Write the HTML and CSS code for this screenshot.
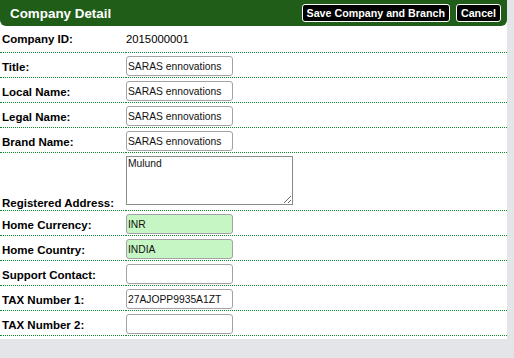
FILE: index.html
```html
<!DOCTYPE html>
<html lang="en">
<head>
    <meta charset="UTF-8">
    <meta name="viewport" content="width=device-width, initial-scale=1.0">
    <title>Company Detail</title>
    <link rel="stylesheet" href="styles.css">
</head>
<body>

<div class="panel">
    <div class="panel-header">
        <h1>Company Detail</h1>
        <div class="actions">
            <button class="action-button">Save Company and Branch</button>
            <button class="action-button">Cancel</button>
        </div>
    </div>

    <table class="detail-table">
        <tr class="plain-row">
            <td class="label">Company ID:</td>
            <td class="value">2015000001</td>
        </tr>
        <tr>
            <td class="label">Title:</td>
            <td class="field"><input type="text" value="SARAS ennovations"></td>
        </tr>
        <tr>
            <td class="label">Local Name:</td>
            <td class="field"><input type="text" value="SARAS ennovations"></td>
        </tr>
        <tr>
            <td class="label">Legal Name:</td>
            <td class="field"><input type="text" value="SARAS ennovations"></td>
        </tr>
        <tr>
            <td class="label">Brand Name:</td>
            <td class="field"><input type="text" value="SARAS ennovations"></td>
        </tr>
        <tr class="address-row">
            <td class="label">Registered Address:</td>
            <td class="field"><textarea>Mulund</textarea></td>
        </tr>
        <tr>
            <td class="label">Home Currency:</td>
            <td class="field"><input type="text" class="locked" value="INR"></td>
        </tr>
        <tr>
            <td class="label">Home Country:</td>
            <td class="field"><input type="text" class="locked" value="INDIA"></td>
        </tr>
        <tr>
            <td class="label">Support Contact:</td>
            <td class="field"><input type="text" value=""></td>
        </tr>
        <tr>
            <td class="label">TAX Number 1:</td>
            <td class="field"><input type="text" value="27AJOPP9935A1ZT"></td>
        </tr>
        <tr>
            <td class="label">TAX Number 2:</td>
            <td class="field"><input type="text" value=""></td>
        </tr>
    </table>
</div>

</body>
</html>
```

FILE: styles.css
```css
body {
    margin: 0;
    padding: 0;
    background-color: #e4e5e9;
    font-family: "Liberation Sans", Arial, sans-serif;
    color: #000;
}
.panel {
    width: 507px;
    background: white;
    padding-bottom: 3px;
}
.panel-header {
    height: 26px;
    background-color: #1f5d18;
    border-radius: 0 0 6px 6px;
    display: flex;
    align-items: center;
    justify-content: space-between;
    padding: 0 6px 0 10px;
    box-sizing: border-box;
}
.panel-header h1 {
    margin: 0;
    color: white;
    font-size: 13.4px;
    font-weight: bold;
}
.actions {
    display: flex;
    gap: 6px;
    margin-top: -1px;
}
.action-button {
    background-color: black;
    color: white;
    border: 1px solid white;
    border-radius: 3px;
    font-family: "Liberation Sans", Arial, sans-serif;
    font-size: 10.7px;
    font-weight: bold;
    height: 18px;
    padding: 0 4px;
    cursor: pointer;
}
.detail-table {
    width: 100%;
    border-collapse: separate;
    border-spacing: 0;
}
.detail-table td {
    border-bottom: 1px dotted #0b8a2b;
    padding: 0;
}
.label {
    width: 124px;
    padding: 0 0 3px 2px !important;
    vertical-align: bottom;
    font-size: 11.5px;
    font-weight: bold;
    line-height: 14px;
    white-space: nowrap;
}
.field {
    padding: 3px 0 1px 0 !important;
    vertical-align: bottom;
}
.plain-row td {
    padding-top: 6px !important;
    padding-bottom: 6px !important;
    vertical-align: middle;
}
.value {
    font-size: 11.3px;
    line-height: 14px;
}
.address-row .label {
    padding-bottom: 0 !important;
}
input {
    display: block;
    width: 107px;
    height: 20px;
    box-sizing: border-box;
    border: 1px solid #a3a3a3;
    border-radius: 3px;
    padding: 0 1px;
    font-family: "Liberation Sans", Arial, sans-serif;
    font-size: 10.3px;
    color: #111;
    background: white;
}
input.locked {
    background-color: #c6f6c3;
}
textarea {
    display: block;
    width: 167px;
    height: 49px;
    box-sizing: border-box;
    margin: 0 0 4px 0;
    border: 1px solid #8a8a8a;
    padding: 1px 1px;
    font-family: "Liberation Sans", Arial, sans-serif;
    font-size: 10.3px;
    color: #111;
}
```
